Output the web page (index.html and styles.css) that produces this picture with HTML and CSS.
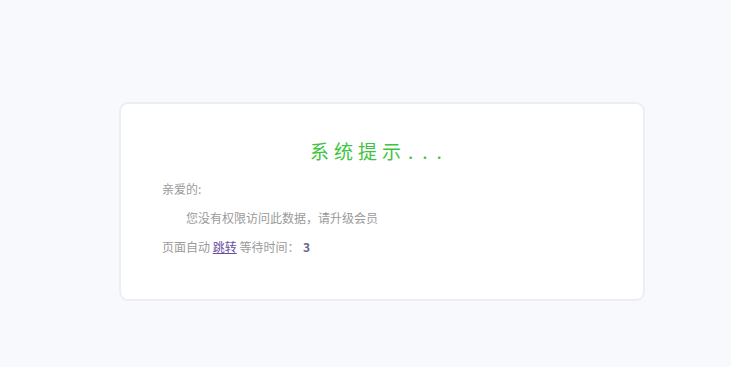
FILE: index.html
```html
<!DOCTYPE html>
<html>

<head>
  <meta charset="UTF-8">
  <title>系统提示</title>
  <link rel="stylesheet" href="styles.css">
</head>

<body>
  <div class="container">
    <h2 class="title">系统提示<span class="dots">...</span></h2>
    <p class="line">亲爱的:</p>
    <p class="line indent">您没有权限访问此数据，请升级会员</p>
    <p class="line">页面自动 <a href="#" class="jump">跳转</a> 等待时间： <b class="wait">3</b></p>
  </div>
</body>

</html>
```

FILE: styles.css
```css
body {
  margin: 0;
  font-family: "Noto Sans CJK SC", "Noto Sans", sans-serif;
  background-color: #f8f9fd;
}

.container {
  width: 461px;
  margin: 102px 0 0 119px;
  padding: 33px 20px 38px 41px;
  border: 2px solid #eceef3;
  border-radius: 9px;
  background-color: #fff;
}

.title {
  margin: 0 0 10px;
  padding-left: 148px;
  font-size: 19px;
  font-weight: normal;
  letter-spacing: 5px;
  color: #3ec43e;
}

.dots {
  letter-spacing: 9px;
  margin-left: 2px;
}

.line {
  margin: 0;
  font-size: 12px;
  line-height: 29px;
  color: #9a9a9a;
}

.indent {
  padding-left: 24px;
}

.jump {
  color: #6a4fa0;
}

.wait {
  margin-left: 1px;
  color: #6c6a86;
}
```
